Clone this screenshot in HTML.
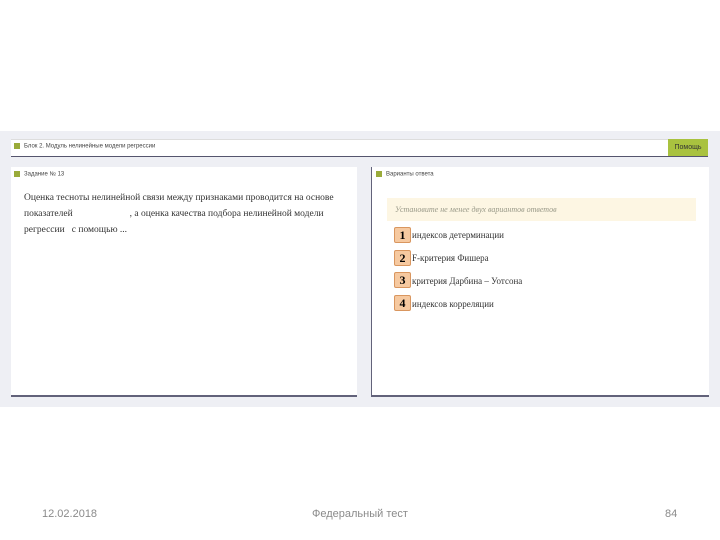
<!DOCTYPE html>
<html><head><meta charset="utf-8"><style>
body{margin:0;width:720px;height:540px;background:#fff;position:relative;overflow:hidden;font-family:"Liberation Sans",sans-serif}
.bg{position:absolute;left:0;top:131px;width:720px;height:276px;background:#eeeff4}
.bar{position:absolute;left:11px;top:139px;width:697px;height:16px;background:#fff;border-bottom:1px solid #55556e;border-top:1px solid #ddd}
.sq{display:inline-block;width:6px;height:6px;background:#9aab3a;margin-right:4px;vertical-align:middle}
.small{font-size:6px;color:#444}
.help{position:absolute;left:668px;top:139px;width:40px;height:17px;background:#a9c23f;font-size:7px;color:#333;text-align:center;line-height:17px}
.pan{position:absolute;top:167px;height:228px;background:#fff;border-bottom:2px solid #62627a}
.serif{font-family:"Liberation Serif",serif;color:#333}
.num{position:absolute;left:394px;width:15px;height:14px;background:#f6c9a0;border:1px solid #d9965f;border-radius:2px;font:bold 12px "Liberation Serif",serif;text-align:center;line-height:14px}
.opt{position:absolute;left:412px;font:9px "Liberation Serif",serif;color:#333}
.foot{position:absolute;top:508px;font-size:11px;color:#8a8a8a}
</style></head><body>
<div class="bg"></div>
<div class="bar"><div style="position:absolute;left:3px;top:3px" class="small"><span class="sq"></span>Блок 2. Модуль нелинейные модели регрессии</div></div>
<div class="help">Помощь</div>
<div class="pan" style="left:11px;width:346px">
<div class="small" style="position:absolute;left:3px;top:4px"><span class="sq"></span>Задание № 13</div>
<div class="serif" style="position:absolute;left:13px;top:23px;width:330px;font-size:9.5px;line-height:16px">Оценка тесноты нелинейной связи между признаками проводится на основе показателей &nbsp;&nbsp;&nbsp;&nbsp;&nbsp;&nbsp;&nbsp;&nbsp;&nbsp;&nbsp;&nbsp;&nbsp;&nbsp;&nbsp;&nbsp;&nbsp;&nbsp;&nbsp;&nbsp;&nbsp;&nbsp;&nbsp;&nbsp;, а оценка качества подбора нелинейной модели регрессии &nbsp;&nbsp;с помощью ...</div>
</div>
<div class="pan" style="left:371px;width:337px;border-left:1px solid #62627a">
<div class="small" style="position:absolute;left:4px;top:4px"><span class="sq"></span>Варианты ответа</div>
<div style="position:absolute;left:15px;top:31px;width:309px;height:23px;background:#fdf6e3"><div class="serif" style="font-size:8px;font-style:italic;color:#998;padding:7px 0 0 8px">Установите не менее двух вариантов ответов</div></div>
</div>
<div class="num" style="top:227px">1</div><div class="opt" style="top:230px">индексов детерминации</div>
<div class="num" style="top:250px">2</div><div class="opt" style="top:253px">F-критерия Фишера</div>
<div class="num" style="top:272px">3</div><div class="opt" style="top:276px">критерия Дарбина – Уотсона</div>
<div class="num" style="top:295px">4</div><div class="opt" style="top:299px">индексов корреляции</div>
<div class="foot" style="left:42px">12.02.2018</div>
<div class="foot" style="left:312px">Федеральный тест</div>
<div class="foot" style="left:665px">84</div>
</body></html>
